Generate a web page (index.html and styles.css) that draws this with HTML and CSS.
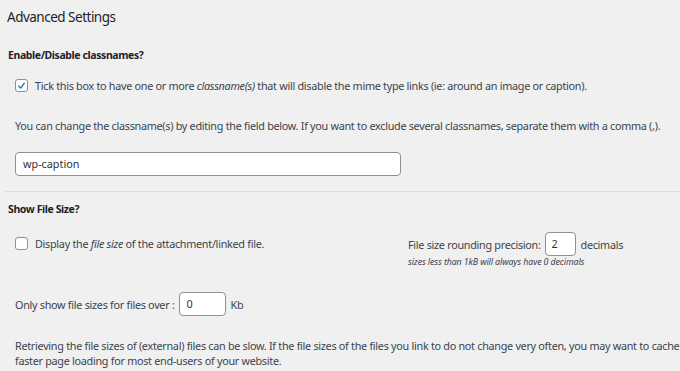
FILE: index.html
```html
<!DOCTYPE html>
<html>
<head>
<meta charset="utf-8">
<link rel="stylesheet" href="styles.css">
</head>
<body>
<div class="page">
  <h2 class="title">Advanced Settings</h2>
  <section class="block first">
    <h3 class="label">Enable/Disable classnames?</h3>
    <div class="content">
      <label class="check-row"><span class="cb checked"><svg viewBox="0 0 20 20" width="12" height="12"><path d="M15 5 8.6 13.8 5 10.4" fill="none" stroke="#2271b1" stroke-width="2.4" stroke-linecap="round" stroke-linejoin="round"/></svg></span><span>Tick this box to have one or more <em>classname(s)</em> that will disable the mime type links (ie: around an image or caption).</span></label>
      <p class="para">You can change the classname(s) by editing the field below. If you want to exclude several classnames, separate them with a comma (,).</p>
      <div class="field wide">wp-caption</div>
    </div>
  </section>
  <section class="block second">
    <h3 class="label">Show File Size?</h3>
    <div class="cols">
      <div class="col-left">
        <label class="check-row"><span class="cb"></span><span>Display the <em>file size</em> of the attachment/linked file.</span></label>
      </div>
      <div class="col-right">
        <div class="inline-row">File size rounding precision: <span class="field small">2</span> decimals</div>
        <div class="note">sizes less than 1kB will always have 0 decimals</div>
      </div>
    </div>
    <div class="inline-row over">Only show file sizes for files over : <span class="field mid">0</span> Kb</div>
    <p class="para last">Retrieving the file sizes of (external) files can be slow. If the file sizes of the files you link to do not change very often, you may want to cache the results. This will result in<br>faster page loading for most end-users of your website.</p>
  </section>
</div>
</body>
</html>
```
FILE: styles.css
```css
html, body {
  margin: 0;
  padding: 0;
  background: #f0f0f1;
  overflow: hidden;
}
.page {
  width: 680px;
  height: 371px;
  overflow: hidden;
  font-family: "Noto Sans", "Open Sans", sans-serif;
  font-size: 10.8px;
  letter-spacing: -0.28px;
  color: #3c434a;
}
.title {
  margin: 0;
  padding: 6px 0 0 7px;
  font-size: 13.5px;
  letter-spacing: -0.5px;
  font-weight: 400;
  line-height: 22px;
  color: #1d2327;
}
.block {
  margin-left: 5px;
}
.block.first {
  padding-top: 19px;
  padding-bottom: 15px;
  border-bottom: 1px solid #dcdcde;
}
.label {
  margin: 0;
  padding-left: 3px;
  font-size: 10.5px;
  letter-spacing: -0.4px;
  font-weight: 700;
  line-height: 16px;
  color: #1d2327;
}
.content {
  padding-left: 10px;
}
.check-row {
  display: flex;
  align-items: center;
  gap: 7px;
  white-space: nowrap;
}
.first .check-row {
  margin-top: 15px;
}
.cb {
  width: 11px;
  height: 11px;
  border: 1px solid #8c8f94;
  border-radius: 3px;
  background: #fff;
  display: flex;
  align-items: center;
  justify-content: center;
  flex: none;
}
.para {
  margin: 25px 0 0;
  line-height: 15px;
  white-space: nowrap;
}
.field {
  box-sizing: border-box;
  background: #fff;
  border: 1px solid #8c8f94;
  border-radius: 4px;
  color: #2c3338;
  letter-spacing: 0;
}
.field.wide {
  margin-top: 19px;
  width: 386px;
  height: 24px;
  line-height: 22px;
  padding-left: 7px;
}
.block.second {
  padding-top: 9px;
}
.cols {
  display: flex;
  padding-left: 10px;
}
.col-left {
  width: 393px;
  padding-top: 19px;
}
.col-right {
  padding-top: 15px;
}
.inline-row {
  display: flex;
  align-items: center;
  white-space: nowrap;
}
.field.small {
  display: inline-block;
  width: 31px;
  height: 24px;
  line-height: 22px;
  padding-left: 6px;
  margin: 0 5px 0 4px;
}
.note {
  margin-top: 0;
  font-size: 8.8px;
  letter-spacing: -0.1px;
  font-style: italic;
  line-height: 12px;
}
.inline-row.over {
  margin-top: 24px;
  padding-left: 10px;
}
.field.mid {
  display: inline-block;
  width: 47px;
  height: 24px;
  line-height: 22px;
  padding-left: 7px;
  margin: 0 5px 0 4px;
}
.para.last {
  margin-top: 22px;
  padding-left: 10px;
  white-space: nowrap;
  line-height: 15px;
}
```
